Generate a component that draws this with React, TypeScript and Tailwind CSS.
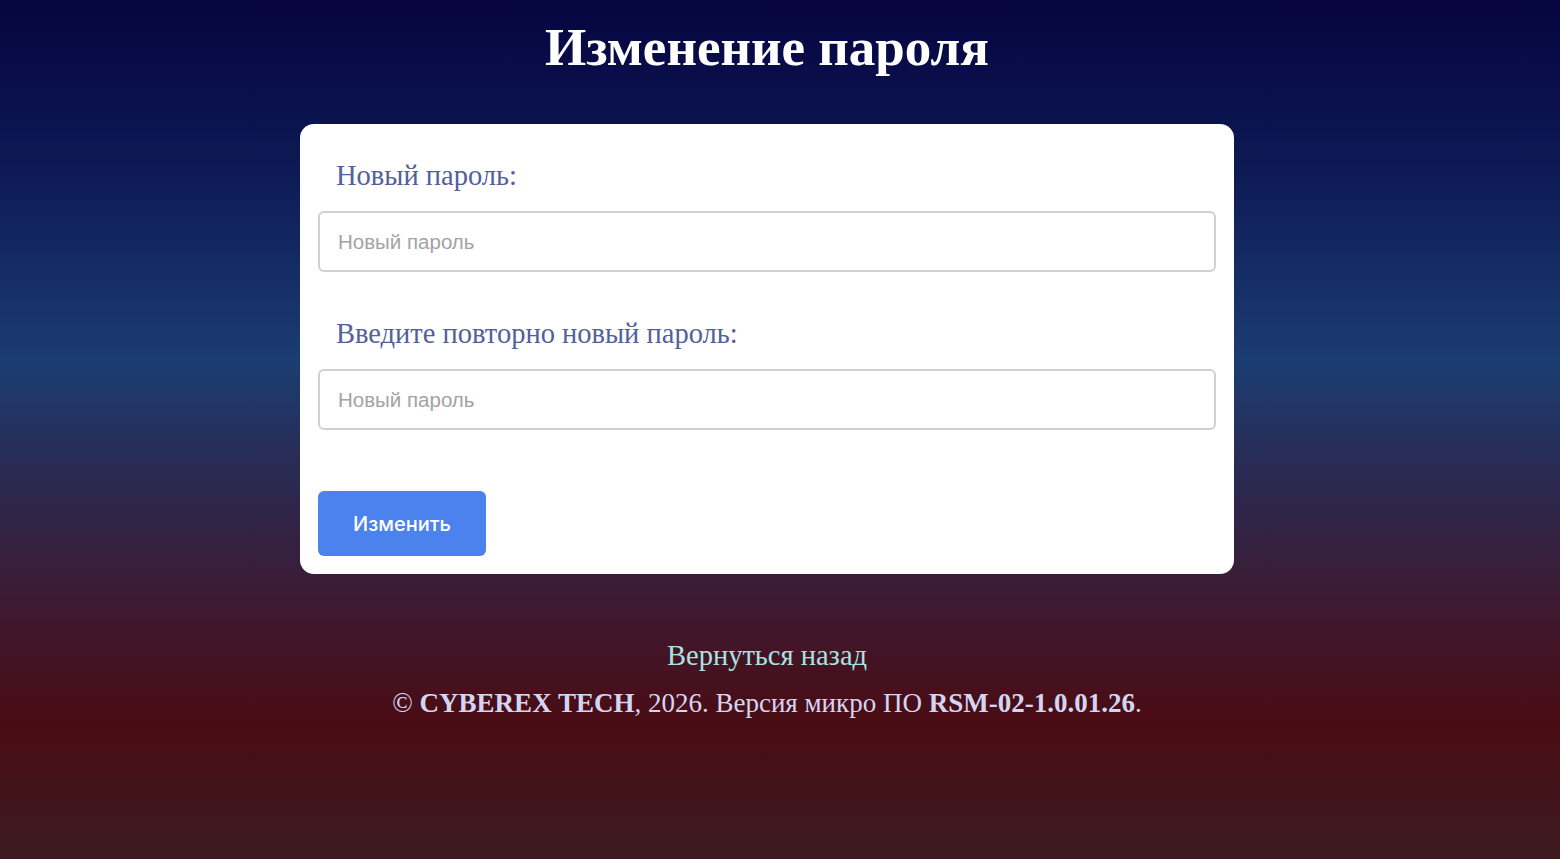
import { useState } from "react";

export default function App() {
  const [pass, setPass] = useState("");
  const [repeat, setRepeat] = useState("");

  return (
    <div className="flex min-h-[859px] w-full flex-col items-center bg-[linear-gradient(to_bottom,#050440_0%,#0e1a55_20%,#1b3d72_42%,#2a2a52_55%,#3b1c36_68%,#4a0c14_84%,#3c1a20_100%)] pr-[26px] font-['Liberation_Serif',serif]">
      <h1 className="mt-[16px] text-[53px] font-bold leading-[62px] text-white">Изменение пароля</h1>

      <form
        className="mt-[46px] flex w-[934px] flex-col rounded-[14px] bg-white p-[18px]"
        onSubmit={(e) => e.preventDefault()}
      >
        <label className="mt-[17px] px-[18px] text-[28.5px] leading-[33px] text-[#53609a]">Новый пароль:</label>
        <input
          type="password"
          value={pass}
          onChange={(e) => setPass(e.target.value)}
          placeholder="Новый пароль"
          className="mt-[19px] h-[61px] w-full rounded-[6px] border-2 border-[#d0d0d0] px-[18px] font-['Liberation_Sans',sans-serif] text-[20.5px] text-gray-800 outline-none placeholder:text-[#a3a3a3]"
        />

        <label className="mt-[45px] px-[18px] text-[28.5px] leading-[33px] text-[#53609a]">
          Введите повторно новый пароль:
        </label>
        <input
          type="password"
          value={repeat}
          onChange={(e) => setRepeat(e.target.value)}
          placeholder="Новый пароль"
          className="mt-[19px] h-[61px] w-full rounded-[6px] border-2 border-[#d0d0d0] px-[18px] font-['Liberation_Sans',sans-serif] text-[20.5px] text-gray-800 outline-none placeholder:text-[#a3a3a3]"
        />

        <button
          type="submit"
          className="mt-[61px] h-[65px] w-[168px] rounded-[6px] bg-[#4c82ee] font-['Inter',sans-serif] text-[20px] font-medium text-white"
        >
          Изменить
        </button>
      </form>

      <a href="#" className="mt-[65px] text-[28.5px] leading-[33px] text-[#a8e3e0]">
        Вернуться назад
      </a>
      <p className="mt-[15px] text-[27px] leading-[33px] text-[#d3d6f2]">
        © <b>CYBEREX TECH</b>, 2026. Версия микро ПО <b>RSM-02-1.0.01.26</b>.
      </p>
    </div>
  );
}
